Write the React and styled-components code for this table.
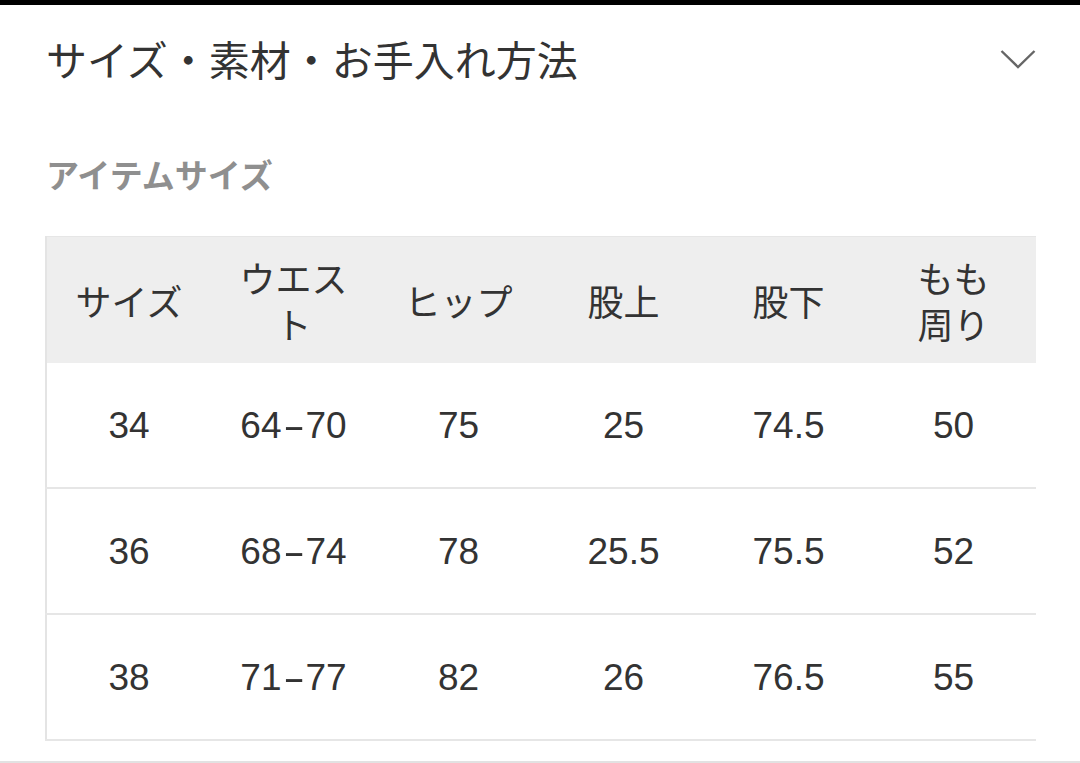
import React from 'react';
import styled, { createGlobalStyle } from 'styled-components';

const GlobalStyle = createGlobalStyle`
    html, body {
        margin: 0;
        padding: 0;
        background: #ffffff;
    }
    body {
        font-family: "Liberation Sans", "Noto Sans CJK JP", sans-serif;
        color: #333333;
    }
`

const Page = styled.div`
    width: 1080px;
    height: 763px;
    box-sizing: border-box;
    border-top: 5px solid #000000;
    border-bottom: 2px solid #e2e2e2;
    overflow: hidden;
`

const Section = styled.section`
    padding: 0 44px 0 45px;
`

const AccordionHeader = styled.div`
    height: 106px;
    display: flex;
    align-items: center;
    justify-content: space-between;
`

const Title = styled.h2`
    margin: 0;
    font-family: "Noto Sans CJK JP", sans-serif;
    font-size: 41px;
    font-weight: 400;
    line-height: 1;
    color: #333333;
    padding-left: 1px;
`

const Chevron = styled.svg`
    width: 36px;
    height: 20px;
    margin-top: 2px;
`

const SubTitle = styled.h3`
    margin: 43px 0 42px;
    font-family: "Noto Sans CJK JP", sans-serif;
    font-size: 33px;
    font-weight: 700;
    line-height: 40px;
    color: #8f8f8f;
    padding-left: 1px;
`

const SizeTable = styled.table`
    width: 991px;
    table-layout: fixed;
    border-collapse: collapse;
    border-left: 2px solid #e4e4e4;
`

const HeadRow = styled.tr`
    background: #eeeeee;
    border-top: 1px solid #e6e6e6;
`

const HeadCell = styled.th`
    height: 126px;
    padding: 0 20px;
    font-family: "Noto Sans CJK JP", sans-serif;
    font-size: 36px;
    font-weight: 400;
    line-height: 46px;
    color: #333333;
    text-align: center;
    vertical-align: middle;
    white-space: pre-line;
`

const BodyRow = styled.tr`
    border-bottom: 2px solid #e6e6e6;
`

const Cell = styled.td`
    height: 122px;
    padding: 2px 10px 0;
    font-family: "Liberation Sans", "Noto Sans CJK JP", sans-serif;
    font-size: 37px;
    color: #333333;
    text-align: center;
    vertical-align: middle;
`

const Dash = styled.span`
    display: inline-block;
    width: 24px;
    text-align: center;
    transform: scaleX(1.8);
`

const columns = ['サイズ', 'ウエスト', 'ヒップ', '股上', '股下', 'もも\n周り'];

const rows = [
    ['34', '64-70', '75', '25', '74.5', '50'],
    ['36', '68-74', '78', '25.5', '75.5', '52'],
    ['38', '71-77', '82', '26', '76.5', '55'],
];

const renderValue = (v) => {
    if (!v.includes('-')) return v;
    const [from, to] = v.split('-');
    return <>{from}<Dash>-</Dash>{to}</>;
};

export default function App() {
    return (
        <Page>
            <GlobalStyle />
            <Section>
                <AccordionHeader>
                    <Title>サイズ・素材・お手入れ方法</Title>
                    <Chevron viewBox="0 0 36 20">
                        <polyline points="1.5,2 18,18 34.5,2" fill="none" stroke="#666666" strokeWidth="2.4" />
                    </Chevron>
                </AccordionHeader>
                <SubTitle>アイテムサイズ</SubTitle>
                <SizeTable>
                    <thead>
                        <HeadRow>
                            {columns.map((c) => <HeadCell key={c}>{c}</HeadCell>)}
                        </HeadRow>
                    </thead>
                    <tbody>
                        {rows.map((r) => (
                            <BodyRow key={r[0]}>
                                {r.map((v, i) => <Cell key={i}>{renderValue(v)}</Cell>)}
                            </BodyRow>
                        ))}
                    </tbody>
                </SizeTable>
            </Section>
        </Page>
    )
}
